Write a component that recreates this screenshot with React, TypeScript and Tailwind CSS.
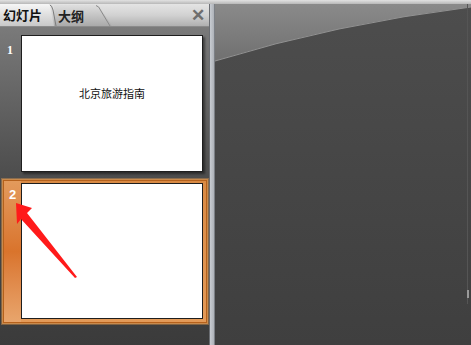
import React from 'react';

const cjk = { fontFamily: '"Noto Sans CJK SC", "Liberation Sans", sans-serif' };

const SlideThumb = ({ children }: { children?: React.ReactNode }) => (
  <div className="w-[182px] h-[137px] bg-white border border-[#1e1e1e] shadow-[2px_2px_2px_rgba(0,0,0,0.45)] flex items-center justify-center">
    {children}
  </div>
);

export default function App() {
  return (
    <div className="w-[471px] h-[345px] flex flex-col bg-[#3c3c3c] overflow-hidden" style={cjk}>
      {/* window top edge */}
      <div className="h-[4px] bg-gradient-to-b from-[#e2e2e2] to-[#b8b8b8]" />

      <div className="flex flex-1 min-h-0">
        {/* slides pane */}
        <div className="w-[209px] flex flex-col">
          <div className="h-[23px] relative flex items-end bg-gradient-to-b from-[#e4e4e4] via-[#d2d2d2] to-[#b0b0b0] border-b border-[#8a8a8a]">
            <div className="h-[22px] w-[54px] flex items-center pl-[3px] bg-gradient-to-b from-[#f6f6f6] to-[#c8c8c8] [clip-path:polygon(0_0,92%_0,100%_100%,0_100%)] text-[13px] font-bold text-[#111] z-10">
              幻灯片
            </div>
            <div className="h-[21px] w-[58px] flex items-center pl-[4px] text-[13px] font-bold text-[#222] bg-gradient-to-b from-[#dedede] to-[#aaaaaa] [clip-path:polygon(0_0,76%_0,100%_100%,0_100%)]">
              大纲
            </div>
            <svg className="absolute left-0 top-0 pointer-events-none" width="209" height="23">
              <path d="M49 0.5 Q52 1 53 6 L56 22" fill="none" stroke="#7c7c7c" strokeWidth="1" />
              <path d="M96 1.5 Q99 2 101 7 L110 22" fill="none" stroke="#8a8a8a" strokeWidth="1" />
            </svg>
            <div className="ml-auto mr-[4px] self-center text-[17px] font-bold text-[#6e6e6e] leading-none" style={{ fontFamily: '"Liberation Sans", sans-serif' }}>
              ✕
            </div>
          </div>

          <div className="flex-1 bg-gradient-to-b from-[#7a7a7a] via-[#4a4a4a] via-50% to-[#3b3b3b] pt-[8px]">
            <div className="flex">
              <div className="w-[21px] pl-[7px] pt-[9px] text-[12px] font-bold text-white leading-none" style={{ fontFamily: '"Liberation Serif", serif' }}>
                1
              </div>
              <SlideThumb>
                <span className="text-[11px] text-[#111] mt-[-20px]">北京旅游指南</span>
              </SlideThumb>
            </div>

            <div className="mt-[7px] ml-[2px] w-[206px] h-[145px] border border-[#c98a4c] bg-[#b5611c] flex p-[1px] shadow-[0_0_0_1px_rgba(255,170,80,0.35)]">
              <div className="w-[17px] h-full bg-gradient-to-b from-[#e39a5c] via-[#d9742c] to-[#e8a56c] pl-[5px] pt-[7px] text-[13px] font-bold text-white leading-none" style={{ fontFamily: '"Liberation Sans", sans-serif' }}>
                2
              </div>
              <div className="flex-1 bg-gradient-to-b from-[#d98a44] to-[#e39a58] pt-[2px] pr-[2px]">
                <div className="w-[182px] h-[136px] bg-white border border-[#1e1e1e]" />
              </div>
            </div>
          </div>
        </div>

        {/* splitter */}
        <div className="w-[6px] flex">
          <div className="w-[1px] bg-[#6a6d72]" />
          <div className="w-[4px] bg-gradient-to-r from-[#c8ccd2] to-[#aeb2b8]" />
          <div className="w-[1px] bg-[#7c8086]" />
        </div>

        {/* editing area */}
        <div className="flex-1 relative bg-gradient-to-b from-[#4d4d4d] to-[#3f3f3f]">
          <svg className="absolute inset-0" width="256" height="341" viewBox="0 0 256 341">
            <defs>
              <linearGradient id="gl" x1="0" y1="0" x2="0" y2="1">
                <stop offset="0" stopColor="#8a8a8a" />
                <stop offset="1" stopColor="#707070" />
              </linearGradient>
            </defs>
            <path d="M0 0 H256 V3 Q120 20 0 57 Z" fill="url(#gl)" />
            <path d="M256 3 Q120 20 0 57" fill="none" stroke="#929292" strokeWidth="1" />
            <rect x="252" y="0" width="1" height="300" fill="#555" />
            <rect x="252" y="286" width="2" height="8" fill="#9a9a9a" />
          </svg>
        </div>
      </div>

      {/* red annotation arrow */}
      <svg className="absolute left-0 top-0 pointer-events-none" width="471" height="345">
        <path d="M16 203 L32 208 L27 213 L77 277 L75 278 L21 219 L17 224 Z" fill="#ff1a1a" />
      </svg>
    </div>
  );
}
